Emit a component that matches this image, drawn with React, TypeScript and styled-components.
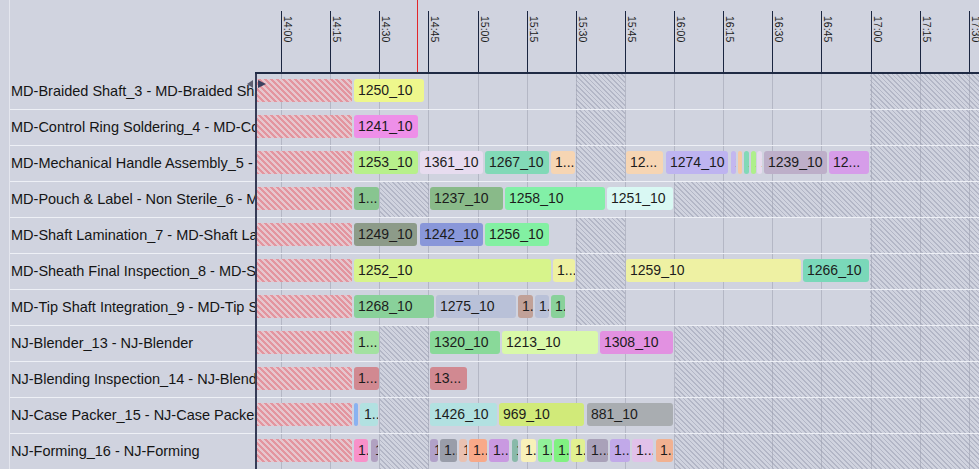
import React from "react";
import styled, { createGlobalStyle } from "styled-components";

const GlobalStyle = createGlobalStyle`
  html, body {
    margin: 0;
    padding: 0;
    background: #d0d3df;
  }
  body {
    font-family: "Liberation Sans", Arial, sans-serif;
  }
`;

// page x where the chart content starts (right after the splitter border)
const CHART_X = 257;
const SIDE_W = 255;
const TICK_X0 = 281.3;
const TICK_STEP = 49.13;
const TICKS = [
  "14:00", "14:15", "14:30", "14:45", "15:00", "15:15", "15:30", "15:45",
  "16:00", "16:15", "16:30", "16:45", "17:00", "17:15", "17:30",
];
const NOW_X = 417;

type Bar = [number, number, string, string];
type Span = [number, number];

interface Resource {
  name: string;
  off: Span[];
  bars: Bar[];
}

const offA: Span[] = [[576, 625], [870, 1000]];
const offB: Span[] = [[380, 429], [674, 1000]];
const offC: Span[] = [[380, 429], [675, 1000]];

const resources: Resource[] = [
  {
    name: "MD-Braided Shaft_3 - MD-Braided Shaft",
    off: offA,
    bars: [[354, 424, "1250_10", "#eef78c"]],
  },
  {
    name: "MD-Control Ring Soldering_4 - MD-Control Ring Soldering",
    off: offA,
    bars: [[354, 418, "1241_10", "#ee8fe8"]],
  },
  {
    name: "MD-Mechanical Handle Assembly_5 - MD-Mechanical Handle Assembly",
    off: offA,
    bars: [
      [354, 418, "1253_10", "#b7f08b"],
      [420, 483, "1361_10", "#e7dcef"],
      [485, 549, "1267_10", "#82d9b7"],
      [551, 575, "1262_10", "#f6d5b3"],
      [626, 663, "1263_10", "#f6d5b3"],
      [666, 728, "1274_10", "#beb4f0"],
      [731, 736, "1276_10", "#c3b7ef"],
      [738, 742, "1277_10", "#f6caa3"],
      [744, 749, "1278_10", "#82d9b7"],
      [751, 756, "1279_10", "#aeef8b"],
      [757, 762, "1280_10", "#e7dcef"],
      [764, 827, "1239_10", "#bdafc9"],
      [829, 869, "1240_10", "#d69de9"],
    ],
  },
  {
    name: "MD-Pouch & Label - Non Sterile_6 - MD-Pouch & Label - Non Sterile",
    off: offB,
    bars: [
      [354, 379, "1236_10", "#88c590"],
      [430, 503, "1237_10", "#89ba89"],
      [505, 605, "1258_10", "#82f0a7"],
      [607, 673, "1251_10", "#d9f8f3"],
    ],
  },
  {
    name: "MD-Shaft Lamination_7 - MD-Shaft Lamination",
    off: offA,
    bars: [
      [354, 417, "1249_10", "#8d9b89"],
      [420, 483, "1242_10", "#8997d9"],
      [485, 549, "1256_10", "#82f0a2"],
    ],
  },
  {
    name: "MD-Sheath Final Inspection_8 - MD-Sheath Final Inspection",
    off: offA,
    bars: [
      [354, 551, "1252_10", "#d7f48b"],
      [553, 575, "1254_10", "#eef1a1"],
      [626, 801, "1259_10", "#eef1a3"],
      [803, 869, "1266_10", "#7ad8b9"],
    ],
  },
  {
    name: "MD-Tip Shaft Integration_9 - MD-Tip Shaft Integration",
    off: offA,
    bars: [
      [354, 434, "1268_10", "#89d19a"],
      [436, 516, "1275_10", "#b9c1d8"],
      [518, 533, "1270_10", "#c1a198"],
      [535, 549, "1271_10", "#b9c1d8"],
      [551, 565, "1272_10", "#89d19a"],
    ],
  },
  {
    name: "NJ-Blender_13 - NJ-Blender",
    off: offC,
    bars: [
      [354, 379, "1319_10", "#a3e1a1"],
      [430, 500, "1320_10", "#89d999"],
      [502, 598, "1213_10", "#d9f9a9"],
      [600, 673, "1308_10", "#e291e1"],
    ],
  },
  {
    name: "NJ-Blending Inspection_14 - NJ-Blending Inspection",
    off: offC,
    bars: [
      [354, 379, "1321_10", "#d18991"],
      [430, 467, "1322_10", "#d18991"],
    ],
  },
  {
    name: "NJ-Case Packer_15 - NJ-Case Packer",
    off: offC,
    bars: [
      [354, 358, "1420_10", "#8ab2f1"],
      [360, 378, "1421_10", "#b2e1e1"],
      [430, 497, "1426_10", "#b2e1e1"],
      [499, 584, "969_10", "#d1ea79"],
      [587, 673, "881_10", "#a9adb1"],
    ],
  },
  {
    name: "NJ-Forming_16 - NJ-Forming",
    off: offC,
    bars: [
      [354, 368, "1401_10", "#f891c9"],
      [371, 378, "1402_10", "#b1a1c1"],
      [430, 438, "1403_10", "#b1a1c9"],
      [440, 457, "1404_10", "#999da9"],
      [459, 467, "1405_10", "#e9c1b1"],
      [469, 487, "1406_10", "#f8a989"],
      [489, 509, "1407_10", "#c999e1"],
      [512, 518, "1408_10", "#89b9a9"],
      [521, 536, "1409_10", "#f8f1b9"],
      [538, 552, "1410_10", "#91f199"],
      [554, 569, "1411_10", "#81f181"],
      [571, 585, "1412_10", "#e1f191"],
      [587, 608, "1413_10", "#a9a1b9"],
      [610, 630, "1414_10", "#c1a9e9"],
      [632, 653, "1415_10", "#e1c1e9"],
      [656, 673, "1416_10", "#f1b191"],
    ],
  },
];

// rough Arial widths at 14px, used to shorten labels the way the scheduler does
const charW = (c: string) => (c === "." ? 3.9 : 7.8);
const textW = (s: string) => s.split("").reduce((w, c) => w + charW(c), 0);

const fitLabel = (label: string, width: number) => {
  const avail = width - 5;
  if (textW(label) <= avail) return label;
  for (let k = label.length - 1; k >= 1; k--) {
    const s = label.slice(0, k) + "...";
    if (textW(s) <= avail) return s;
  }
  return label[0] + "...";
};

const Screen = styled.div`
  display: flex;
  width: 100%;
  height: 100vh;
  overflow: hidden;
  position: relative;
  background: #d0d3df;
`;

const Side = styled.div`
  flex: 0 0 ${SIDE_W - 9}px;
  margin-left: 9px;
  padding-top: 74px;
  box-sizing: border-box;
  border-left: 1px solid #e4e6ee;
  overflow: hidden;
`;

const ResourceName = styled.div`
  height: 35px;
  line-height: 35px;
  border-bottom: 1px solid #eef0f6;
  padding-left: 1px;
  font-size: 14.5px;
  color: #151515;
  white-space: nowrap;
  overflow: hidden;
`;

const Main = styled.div`
  flex: 1;
  display: flex;
  flex-direction: column;
  min-width: 0;
`;

const Scale = styled.div`
  position: relative;
  flex: 0 0 74px;
  display: flex;
  box-sizing: border-box;
  padding: 11px 0 0 ${Math.round(TICK_X0) - SIDE_W}px;
  border-bottom: 2px solid #1f2a44;
  overflow: hidden;
`;

const TickCell = styled.div`
  flex: 0 0 ${TICK_STEP}px;
  box-sizing: border-box;
  border-left: 1px solid #1a2540;
  padding: 5px 0 0 1px;
`;

const TickLabel = styled.span`
  display: block;
  writing-mode: vertical-rl;
  font-size: 10.5px;
  line-height: 10px;
  color: #1b1b1b;
`;

const NowLine = styled.div`
  position: absolute;
  top: 0;
  bottom: 0;
  left: ${NOW_X - SIDE_W}px;
  width: 1px;
  background: #e2262a;
`;

const Chart = styled.div`
  position: relative;
  flex: 1;
  border-left: 2px solid #363b56;
`;

const GridLayer = styled.div`
  position: absolute;
  inset: 0;
  display: flex;
  padding-left: ${Math.round(TICK_X0) - CHART_X}px;
  overflow: hidden;
`;

const GridCell = styled.div`
  flex: 0 0 ${TICK_STEP}px;
  box-sizing: border-box;
  border-left: 1px solid #b4b7c5;
`;

const Row = styled.div`
  position: relative;
  height: 35px;
  border-bottom: 1px solid #eef0f6;
`;

const OffTime = styled.div`
  position: absolute;
  top: 0;
  bottom: 0;
  background: repeating-linear-gradient(
    45deg,
    rgba(150, 154, 174, 0.5) 0 1.4px,
    transparent 1.4px 3.3px
  );
`;

const PastTime = styled.div`
  position: absolute;
  left: 0;
  top: 5px;
  height: 23px;
  width: 95px;
  background: repeating-linear-gradient(
    45deg,
    #e3959f 0 2.1px,
    #e6c6ce 2.1px 4.2px
  );
`;

const Task = styled.div<{ $color: string }>`
  position: absolute;
  top: 5px;
  height: 23px;
  box-sizing: border-box;
  padding-left: 4px;
  border-radius: 3px;
  background: ${(p) => p.$color};
  font-size: 14px;
  line-height: 23px;
  color: #1c1c1c;
  white-space: nowrap;
  overflow: hidden;
`;

const Splitter = styled.div`
  position: absolute;
  top: 80px;
  left: 247px;
  display: flex;
  gap: 5px;
  pointer-events: none;
`;

function App() {
  return (
    <>
      <GlobalStyle />
      <Screen>
        <Side>
          {resources.map((r) => (
            <ResourceName key={r.name}>{r.name}</ResourceName>
          ))}
        </Side>
        <Main>
          <Scale>
            {TICKS.map((t) => (
              <TickCell key={t}>
                <TickLabel>{t}</TickLabel>
              </TickCell>
            ))}
            <NowLine />
          </Scale>
          <Chart>
            <GridLayer>
              {TICKS.map((t) => (
                <GridCell key={t} />
              ))}
            </GridLayer>
            {resources.map((r) => (
              <Row key={r.name}>
                <PastTime />
                {r.off.map(([a, b]) => (
                  <OffTime key={a} style={{ left: a - CHART_X, width: b - a }} />
                ))}
                {r.bars.map(([a, b, label, color]) => (
                  <Task
                    key={label}
                    $color={color}
                    style={{ left: a - CHART_X, width: b - a }}
                  >
                    {fitLabel(label, b - a)}
                  </Task>
                ))}
              </Row>
            ))}
          </Chart>
        </Main>
        <Splitter>
          <svg width="6" height="8" viewBox="0 0 6 8">
            <path d="M6 0 L0 4 L6 8 Z" fill="#5c5d70" />
          </svg>
          <svg width="8" height="8" viewBox="0 0 8 8">
            <path d="M0 0 L8 4 L0 8 Z" fill="#3a4060" />
          </svg>
        </Splitter>
      </Screen>
    </>
  );
}

export default App;
